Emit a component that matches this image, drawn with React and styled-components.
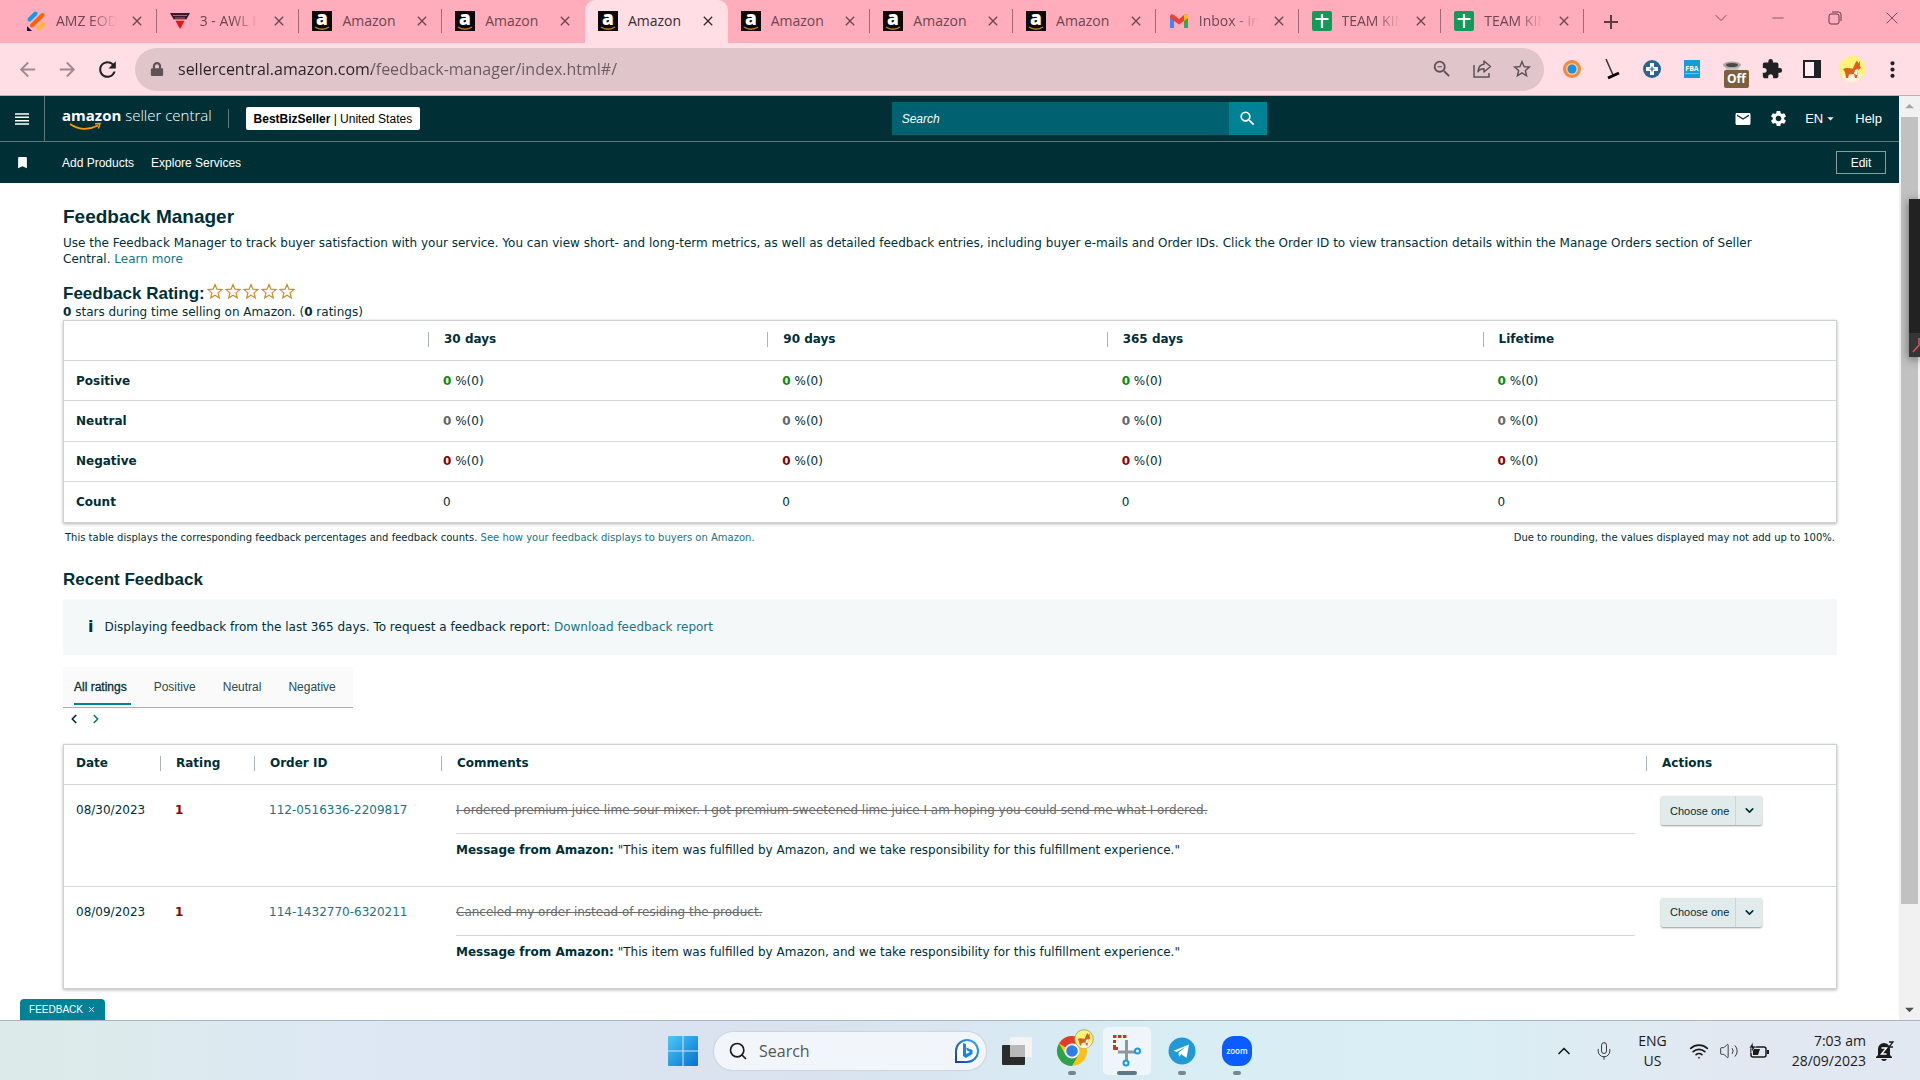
import React from 'react'
import styled, { createGlobalStyle } from 'styled-components'
import {
    MdArrowBack, MdArrowForward, MdRefresh, MdZoomOut, MdStarBorder, MdExtension,
    MdMoreVert, MdEmail, MdSettings, MdSearch, MdBookmark, MdArrowDropDown, MdArrowDropUp, MdClose, MdAdd
} from 'react-icons/md'
import { FaLock } from 'react-icons/fa'
import { ChevronDown, ChevronLeft, ChevronRight, ChevronUp, Mic, Minus, Search, Volume2, Wifi, X } from 'lucide-react'

const GlobalStyle = createGlobalStyle`
    * {
        box-sizing: border-box;
    }
    body {
        margin: 0;
        background: white;
    }
    button, input, select {
        font: inherit;
        color: inherit;
        border: none;
        background: none;
        padding: 0;
        margin: 0;
    }
    h1, h2, p {
        margin: 0;
    }
    svg {
        display: block;
        flex: none;
        overflow: visible;
    }
`
const Screen = styled.div`
    position: relative;
    display: flex;
    flex-direction: column;
    min-height: 100vh;
    overflow: hidden;
`

/* browser window */

const TabStrip = styled.div`
    display: flex;
    align-items: center;
    height: 43px;
    padding-left: 14px;
    background: #ffadbc;
    font-family: 'Open Sans', 'Noto Sans', sans-serif;
    font-size: 14px;
    color: #5d3b43;
`
const TabList = styled.div`
    flex: 0 1 1570px;
    display: grid;
    grid-template-columns: repeat(11, 1fr);
    height: 43px;
`
const BrowserTab = styled.div`
    position: relative;
    display: flex;
    align-items: center;
    min-width: 0;
    padding: 0 12px 2px 13px;
    color: ${p => p.$active ? '#3c2a2e' : '#6b4750'};
    background: ${p => p.$active ? '#ffdfe5' : 'none'};
    border-radius: 10px 10px 0 0;
    &::after {
        content: '';
        position: absolute;
        right: 0;
        top: 9px;
        width: 1px;
        height: 24px;
        background: ${p => p.$line ? '#a06a76' : 'none'};
    }
`
const TabTitle = styled.span`
    flex: 1;
    margin-left: 10px;
    margin-right: 12px;
    overflow: hidden;
    white-space: nowrap;
    mask-image: ${p => p.$fade ? 'linear-gradient(90deg, #000 55%, transparent 100%)' : 'none'};
`
const IconButton = styled.button`
    display: flex;
    align-items: center;
    justify-content: center;
    width: ${p => p.$w || 40}px;
    color: ${p => p.$color || 'inherit'};
`
const WindowControls = styled.div`
    display: flex;
    align-items: center;
    margin-left: auto;
    padding-bottom: 7px;
`
const Toolbar = styled.div`
    display: flex;
    align-items: center;
    height: 53px;
    padding: 0 8px 0 7px;
    background: #ffdfe5;
    border-bottom: 1px solid #c9aab1;
    color: #202124;
`
const Omnibox = styled.div`
    flex: 1;
    display: flex;
    align-items: center;
    height: 43px;
    margin: 0 8px;
    padding: 0 2px 0 15px;
    border-radius: 22px;
    background: #e0c5ca;
    color: #5f5257;
`
const UrlInput = styled.input`
    flex: 1;
    min-width: 0;
    height: 30px;
    margin-left: 14px;
    outline: none;
    font-family: 'Open Sans', 'Noto Sans', sans-serif;
    font-size: 16px;
    color: transparent;
    background-image: linear-gradient(90deg, #2a2226 194px, #6a595e 194px);
    background-clip: text;
`
const Extension = styled.button`
    position: relative;
    display: flex;
    justify-content: center;
    width: 40px;
`
const OffBadge = styled.span`
    position: absolute;
    left: 12px;
    top: 11px;
    padding: 0 3px;
    border-radius: 2px;
    background: #7b6040;
    color: white;
    font: bold 12px/18px 'Open Sans', sans-serif;
`

/* seller central */

const Viewport = styled.div`
    flex: 1;
    display: flex;
`
const Page = styled.div`
    flex: 1;
    min-width: 0;
    display: flex;
    flex-direction: column;
    font-family: Verdana, 'DejaVu Sans', sans-serif;
    font-size: 12px;
    line-height: 16px;
    color: #002f36;
`
const NavRow = styled.div`
    display: flex;
    align-items: center;
    height: ${p => p.$height}px;
    border-bottom: ${p => p.$line ? '1px solid #5f777b' : 'none'};
    background: #002f36;
    color: white;
    font-family: 'Liberation Sans', Arial, sans-serif;
    font-size: 12px;
`
const MenuCell = styled.button`
    display: flex;
    align-items: center;
    justify-content: center;
    width: 45px;
    height: 100%;
    border-right: ${p => p.$line ? '1px solid #5f777b' : 'none'};
`
const Brand = styled.a`
    display: flex;
    flex-direction: column;
    margin: 0 16px 0 17px;
    color: white;
    text-decoration: none;
    font-family: 'Open Sans', sans-serif;
    font-size: 15px;
    line-height: 16px;
    white-space: nowrap;
    font-weight: 300;
    b {
        font-weight: 700;
    }
`
const NavRule = styled.span`
    width: 1px;
    height: 19px;
    background: #5f777b;
`
const Account = styled.button`
    height: 23px;
    margin: 0 17px;
    padding: 0 8px;
    border-radius: 2px;
    background: white;
    color: black;
    white-space: nowrap;
`
const SearchForm = styled.form`
    display: flex;
    flex: 0 1 375px;
    height: 33px;
    margin-left: auto;
`
const SearchField = styled.input`
    flex: 1;
    min-width: 0;
    padding: 0 10px;
    background: #006170;
    &::placeholder {
        color: white;
        font-style: italic;
    }
`
const SearchButton = styled.button`
    display: flex;
    align-items: center;
    justify-content: center;
    width: 38px;
    background: #008296;
`
const NavTools = styled.div`
    display: flex;
    align-items: center;
    justify-content: flex-end;
    gap: 17px;
    width: 33.3%;
    padding-right: 17px;
    font-size: 13px;
`
const Language = styled.button`
    display: flex;
    align-items: center;
`
const NavLink = styled.a`
    margin-left: ${p => p.$gap || 0}px;
    color: white;
    text-decoration: none;
`
const EditButton = styled.button`
    width: 50px;
    height: 23px;
    margin: 0 13px 0 auto;
    border: 1px solid #8b9c9f;
`
const Content = styled.main`
    flex: 1;
    display: flex;
    flex-direction: column;
    padding: 22px 62px 0 63px;
`
const Title = styled.h1`
    font: bold 19px/24px 'Liberation Sans', Arial, sans-serif;
`
const Subtitle = styled.h2`
    display: flex;
    align-items: center;
    font: bold 17px/20px 'Liberation Sans', Arial, sans-serif;
`
const Intro = styled.p`
    margin: 6px 0 16px;
    padding-right: 40px;
`
const Link = styled.a`
    color: #1b7481;
    text-decoration: none;
`
const Stars = styled.span`
    display: flex;
    gap: 2px;
    margin-left: 2px;
    padding-bottom: 4px;
`
const DataTable = styled.table`
    width: 100%;
    height: ${p => p.$height}px;
    border: 1px solid #cfd3d4;
    border-collapse: separate;
    border-spacing: 0;
    table-layout: fixed;
    box-shadow: 0 1px 3px rgba(0, 0, 0, 0.3);
    text-align: left;
    thead {
        height: 40px;
    }
`
const HeadCell = styled.th`
    width: ${p => p.$w || 'auto'};
    height: 40px;
    padding: 0 0 2px;
    border-bottom: 1px solid #d3d7d8;
    line-height: 15px;
    span {
        display: block;
        padding-left: ${p => p.$first ? 12 : 15}px;
        border-left: ${p => p.$first ? 'none' : '1px solid #a9b4b6'};
    }
`
const Cell = styled.td`
    height: ${p => p.$top ? 101 : 40}px;
    padding: ${p => p.$top || 0}px 11px 0 15px;
    vertical-align: ${p => p.$top ? 'top' : 'middle'};
    tr:not(:last-child) > & {
        border-bottom: 1px solid #d3d7d8;
    }
    &:first-child {
        padding-left: 12px;
        padding-right: 0;
    }
`
const RowHead = styled(Cell).attrs({ as: 'th', scope: 'row' })``
const Score = styled.b`
    color: ${p => p.$color};
`
const Footnotes = styled.div`
    display: flex;
    justify-content: space-between;
    margin: 8px 2px 25px;
    font-size: 10px;
    line-height: 14px;
`
const Notice = styled.div`
    display: flex;
    align-items: center;
    gap: 11px;
    height: 56px;
    margin: 9px 0 12px;
    padding-left: 25px;
    background: #f4f8f9;
    b {
        font-size: 16px;
    }
`
const RatingTabs = styled.div`
    display: flex;
    align-self: flex-start;
    gap: 23px;
    height: 41px;
    padding: 0 13px 0 11px;
    border-bottom: 1px solid #a5b0b2;
    background: #fafafa;
    font-family: 'Liberation Sans', Arial, sans-serif;
`
const RatingTab = styled.button`
    height: 38px;
    padding-top: 3px;
    padding-right: 4px;
    border-bottom: 2px solid ${p => p.$active ? '#008296' : 'transparent'};
    color: ${p => p.$active ? '#002f36' : '#2b4a50'};
    -webkit-text-stroke: ${p => p.$active ? '0.3px' : '0'};
`
const Pager = styled.div`
    display: flex;
    height: 22px;
    margin-bottom: 14px;
`
const Comment = styled.div`
    padding-bottom: 15px;
    border-bottom: 1px solid #d3d7d8;
    color: #6b6b6b;
    text-decoration: line-through;
`
const Message = styled.div`
    padding: 8px 0 0;
`
const Picker = styled.div`
    position: relative;
    width: 101px;
    height: 29px;
    border-radius: 2px;
    background: #e2ebec;
    box-shadow: 0 1px 2px rgba(0, 0, 0, 0.4);
`
const PickerSelect = styled.select`
    width: 100%;
    height: 100%;
    padding-left: 9px;
    appearance: none;
    font-family: 'Liberation Sans', Arial, sans-serif;
    font-size: 11px;
`
const PickerArrow = styled.span`
    position: absolute;
    top: 0;
    right: 0;
    display: flex;
    align-items: center;
    justify-content: center;
    width: 27px;
    height: 100%;
    border-left: 1px solid #cbd6d8;
    pointer-events: none;
`
const FeedbackTab = styled.button`
    display: flex;
    align-items: center;
    justify-content: center;
    gap: 4px;
    width: 85px;
    height: 21px;
    margin-left: 20px;
    border-radius: 4px 4px 0 0;
    background: #008296;
    color: white;
    font: 10px 'Liberation Sans', Arial, sans-serif;
`
const Scrollbar = styled.div`
    display: flex;
    flex-direction: column;
    align-items: center;
    width: 21px;
    background: #f1f1f1;
`
const Thumb = styled.div`
    flex: 1;
    width: 17px;
    margin-bottom: 95px;
    background: #c1c1c1;
`
const CallPanel = styled.div`
    position: absolute;
    right: 0;
    top: 199px;
    width: 11px;
    height: 158px;
    background: linear-gradient(#222 134px, #353535 134px);
    box-shadow: 0 2px 10px rgba(0, 0, 0, 0.5);
    svg {
        position: absolute;
        left: 3px;
        bottom: 3px;
    }
`

/* taskbar */

const Taskbar = styled.div`
    display: grid;
    grid-template-columns: 1fr auto 1fr;
    align-items: center;
    height: 60px;
    border-top: 1px solid #a9b4bc;
    background: linear-gradient(90deg, #dcebe8, #dde8f4 18%, #d9e2ee 42%, #d8ecf4 58%, #d9eff5 75%, #e2e8f1 90%);
    font-family: 'Open Sans', 'Noto Sans', sans-serif;
    color: #1b1b1b;
`
const Apps = styled.div`
    grid-column: 2;
    display: flex;
    align-items: center;
    gap: 7px;
`
const AppButton = styled.button`
    position: relative;
    display: flex;
    align-items: center;
    justify-content: center;
    width: 48px;
    height: 48px;
    border-radius: 5px;
    background: ${p => p.$active ? '#eff6fa' : 'none'};
    &::after {
        content: '';
        position: absolute;
        bottom: 0;
        width: ${p => p.$mark || 0}px;
        height: 4px;
        border-radius: 2px;
        background: ${p => p.$active ? '#5c7886' : '#78868d'};
    }
`
const TaskSearch = styled.label`
    display: flex;
    align-items: center;
    width: 272px;
    height: 38px;
    padding: 0 6px 0 14px;
    border-radius: 19px;
    background: #f2f6fa;
    box-shadow: 0 0 1px 1px #cbd5de;
    input {
        flex: 1;
        min-width: 0;
        margin-left: 11px;
        font-size: 16px;
    }
    input::placeholder {
        color: #555;
    }
`
const Tray = styled.div`
    display: flex;
    align-items: center;
    justify-content: flex-end;
    gap: 10px;
    padding-right: 26px;
    font-size: 14px;
    line-height: 20px;
`
const Stack = styled.div`
    display: flex;
    flex-direction: column;
    align-items: ${p => p.$end ? 'flex-end' : 'center'};
    margin: 0 ${p => p.$right || 0}px 0 ${p => p.$left || 0}px;
`

const AmazonFavicon = () => (
    <svg width="20" height="20" viewBox="0 0 20 20">
        <rect width="20" height="20" fill="#0b0706" />
        <text x="10" y="14" textAnchor="middle" fontFamily="Open Sans, sans-serif" fontSize="19" fontWeight="800" fill="#fff">a</text>
        <path d="M3 16C7 19 13 19 17 16" fill="none" stroke="#c07a18" strokeWidth="1.500" />
    </svg>
)
const SlashFavicon = () => (
    <svg width="19" height="20" viewBox="0 0 19 20">
        <path d="M2.500 8.500L8.500 2.500" stroke="#0d99ff" strokeWidth="4" strokeLinecap="round" />
        <path d="M5 14.500L15.500 4" stroke="#ff6100" strokeWidth="4" strokeLinecap="round" />
        <path d="M11.500 17.500L16 13" stroke="#ffb629" strokeWidth="4" strokeLinecap="round" />
        <path d="M0 15v5h5z" fill="#0a1551" />
    </svg>
)
const ShieldFavicon = () => (
    <svg width="20" height="20" viewBox="0 0 20 20">
        <path d="M0 2h20l-4 7H4z" fill="#3a1630" />
        <path d="M3 4.500h14M5 7h10" stroke="#b56a3a" strokeWidth="1" />
        <path d="M5 9h10l-5 9z" fill="#f01018" />
        <path d="M4 9h12" stroke="#fff" strokeWidth="1" />
    </svg>
)
const GmailFavicon = () => (
    <svg width="20" height="20" viewBox="0 0 20 20">
        <path d="M1 6v11h4V9z" fill="#4285f4" />
        <path d="M19 6v11h-4V9z" fill="#34a853" />
        <path d="M1 5q1-3 4-1l5 4 5-4q3-2 4 1v2l-9 6.500L1 7z" fill="#ea4335" />
        <path d="M15 4q3-2 4 1v2l-4 3z" fill="#fbbc04" />
    </svg>
)
const SheetFavicon = () => (
    <svg width="20" height="20" viewBox="0 0 20 20">
        <rect width="20" height="20" rx="2" fill="#149a58" />
        <path d="M10 3v14M3.500 8h13" stroke="#fff" strokeWidth="2.200" />
    </svg>
)
const ShareIcon = () => (
    <svg width="20" height="20" viewBox="0 0 20 20" fill="none" stroke="currentColor" strokeWidth="1.500">
        <path d="M2 6v12h15v-4" />
        <path d="M12 2l6.500 5.500L12 13v-3.200c-3 0-4.800.8-6 3 .2-4 2.400-7.300 6-7.600z" strokeLinejoin="round" />
    </svg>
)
const RestoreIcon = () => (
    <svg width="14" height="14" viewBox="0 0 14 14" fill="none" stroke="currentColor">
        <rect x="1" y="3" width="10" height="10" rx="2" />
        <path d="M4 1h6.500Q13 1 13 3.500V10" />
    </svg>
)
const RingIcon = () => (
    <svg width="20" height="20" viewBox="0 0 20 20">
        <circle cx="10" cy="10" r="9" fill="#f08a3c" />
        <circle cx="10" cy="10" r="6" fill="#f9c79a" />
        <circle cx="10" cy="10" r="4.500" fill="#1993dd" />
    </svg>
)
const BroomIcon = () => (
    <svg width="20" height="22" viewBox="0 0 20 22">
        <path d="M4 1l7 16" stroke="#333" strokeWidth="1.500" />
        <path d="M6 20l11-5" stroke="#000" strokeWidth="3" />
    </svg>
)
const PlusBadgeIcon = () => (
    <svg width="20" height="20" viewBox="0 0 20 20">
        <circle cx="10" cy="10" r="9" fill="#2a6494" />
        <path d="M8 4h4v4h4v4h-4v4H8v-4H4V8h4z" fill="#fff" />
        <path d="M10 7.500v5M7.500 10h5" stroke="#2a6494" strokeWidth="1.200" />
    </svg>
)
const FbaIcon = () => (
    <svg width="16" height="18" viewBox="0 0 16 18">
        <rect width="16" height="18" fill="#129ed9" />
        <text x="8" y="11" textAnchor="middle" fontFamily="Open Sans, sans-serif" fontSize="7" fontWeight="700" fill="#fff">FBA</text>
        <path d="M1 13.500h14" stroke="#6cc6ec" />
    </svg>
)
const HatIcon = () => (
    <svg width="20" height="20" viewBox="0 0 20 20">
        <path d="M3 6h14l-2 11H5z" fill="#c9c4c6" />
        <ellipse cx="10" cy="6" rx="9" ry="3.500" fill="#aaa5a7" />
        <ellipse cx="10" cy="6" rx="6" ry="2" fill="#4b4648" />
    </svg>
)
const PanelIcon = () => (
    <svg width="18" height="18" viewBox="0 0 18 18">
        <rect x="1" y="1" width="16" height="16" fill="#ffeef1" stroke="#202124" strokeWidth="2" />
        <path d="M11 1h6v16h-6z" fill="#202124" />
    </svg>
)
const CorgiIcon = ({ size, ring }) => (
    <svg width={size} height={size} viewBox="0 0 28 28">
        <circle cx="14" cy="14" r="13" fill="#fdf27a" stroke={ring || 'none'} />
        <path d="M4 20q10-3 20 0-3 7-10 7T4 20z" fill="#fff3e2" />
        <path d="M5 14l3-1 7 .500 2-5 2-3 1.500 3L22 6v5l1 2-3 2-1 8h-2l-1-4-5 .500-1 3.500H8l-1-6z" fill="#d9601f" />
        <path d="M17 15l3-1-1 6-3-1z" fill="#fff" />
    </svg>
)
const SmileIcon = () => (
    <svg width="60" height="8" viewBox="0 0 60 8">
        <path d="M8 1q13 9 28 1.500" fill="none" stroke="#ff9900" strokeWidth="1.800" />
        <path d="M33 .800l5-.300-1.500 5" fill="none" stroke="#ff9900" strokeWidth="1.400" />
    </svg>
)
const MenuIcon = () => (
    <svg width="14" height="12" viewBox="0 0 14 12" stroke="white" strokeWidth="1.500">
        <path d="M0 1h14M0 4.300h14M0 7.700h14M0 11h14" />
    </svg>
)
const Star = () => (
    <svg width="16" height="17" viewBox="0 0 16 17">
        <path d="M8 1.500l1.900 4.700 5 .4-3.800 3.300 1.200 5L8 12.200l-4.300 2.700 1.200-5L1.100 6.600l5-.4z" fill="#fffdf5" stroke="#c78f2b" strokeWidth="1.200" />
    </svg>
)
const WindowsIcon = () => (
    <svg width="30" height="30" viewBox="0 0 30 30">
        <defs>
            <linearGradient id="win" x1="0" y1="0" x2="1" y2="1">
                <stop offset="0" stopColor="#4cc8f7" />
                <stop offset="1" stopColor="#0571cf" />
            </linearGradient>
        </defs>
        <path d="M0 1q0-1 1-1h13.500v14.500H0zM15.500 0H29q1 0 1 1v13.500H15.500zM0 15.500h14.500V30H1q-1 0-1-1zM15.500 15.500H30V29q0 1-1 1H15.500z" fill="url(#win)" />
    </svg>
)
const BingIcon = () => (
    <svg width="26" height="26" viewBox="0 0 26 26">
        <defs>
            <linearGradient id="bing" x1="0" y1="1" x2="1" y2="0">
                <stop offset="0" stopColor="#1b3fae" />
                <stop offset="1" stopColor="#2bb0ee" />
            </linearGradient>
        </defs>
        <path d="M2 24V13A11 11 0 1 1 13 24z" fill="#fff" stroke="url(#bing)" strokeWidth="2" />
        <path d="M9 5l3 1v10l4-2-3-1.500-1-3 6.500 2.500v4L12 20l-3-2z" fill="#1a86e0" />
    </svg>
)
const TaskViewIcon = () => (
    <svg width="30" height="28" viewBox="0 0 30 28">
        <rect x="0" y="8" width="23" height="20" rx="1" fill="#2b2b2b" />
        <rect x="8" y="0" width="22" height="20" rx="1" fill="#f3f3f3" />
        <path d="M8 8h15v12H8z" fill="#b9b9b9" />
    </svg>
)
const ChromeIcon = () => (
    <svg width="30" height="30" viewBox="0 0 30 30">
        <circle cx="15" cy="15" r="15" fill="#fbc116" />
        <path d="M15 15L2 7.500A15 15 0 0 1 28 7.500H15z" fill="#e33b2e" />
        <path d="M15 15L8.500 18.800 2 7.500A15 15 0 0 0 15 30l6.500-11.200z" fill="#2ba24c" />
        <circle cx="15" cy="15" r="7.500" fill="#fff" />
        <circle cx="15" cy="15" r="5.800" fill="#2f7de9" />
    </svg>
)
const ProfileBadge = styled.span`
    position: absolute;
    right: 2px;
    top: 2px;
`
const SnipIcon = () => (
    <svg width="28" height="32" viewBox="0 0 28 32">
        <path d="M0 1.500h3.500M5 1.500h3.500M10 1.500h3.500M1.500 5v3M1.500 10v4.500M0 13.500h5" stroke="#c4391d" strokeWidth="3" />
        <path d="M13.500 5v20M5 17h17" stroke="#8e979c" strokeWidth="3" fill="none" />
        <circle cx="13" cy="28" r="2.500" fill="none" stroke="#1c9be0" strokeWidth="2" />
        <circle cx="24.500" cy="16" r="2.500" fill="none" stroke="#1c9be0" strokeWidth="2" />
    </svg>
)
const TelegramIcon = () => (
    <svg width="28" height="28" viewBox="0 0 28 28">
        <circle cx="14" cy="14" r="13.500" fill="#2199d6" />
        <path d="M5.500 13.800L21 7.500 18.500 21l-5-3.800-2.500 2.500-.5-4.200L18 9.800l-9.300 5.300z" fill="#fff" />
    </svg>
)
const ZoomIcon = () => (
    <svg width="30" height="30" viewBox="0 0 30 30">
        <rect width="30" height="30" rx="12" fill="#0b5cff" />
        <text x="15" y="18" textAnchor="middle" fontFamily="Open Sans, sans-serif" fontSize="8" fontWeight="600" fill="#fff">zoom</text>
    </svg>
)
const BatteryIcon = () => (
    <svg width="21" height="18" viewBox="0 0 21 18" fill="none">
        <rect x="2" y="5" width="15" height="10" rx="2" stroke="#1b1b1b" strokeWidth="1.500" />
        <path d="M4 7h7l-2 6H4zM18 8h2v4h-2z" fill="#1b1b1b" />
        <path d="M4 0L0 6h3l-1 5 5-7H4z" fill="#1b1b1b" stroke="#e2e8f1" strokeWidth=".600" />
    </svg>
)
const BellIcon = () => (
    <svg width="18" height="20" viewBox="0 0 18 20">
        <path d="M2 14V8a6 6 0 0 1 12 0v6l2 2v1H0v-1zM5 18h6q-1 2-3 2t-3-2z" fill="#1b1b1b" />
        <path d="M5.500 7h5l-5 6h5" fill="none" stroke="#fff" strokeWidth="1.400" />
        <path d="M13 1h4l-4 5h4" fill="none" stroke="#1b1b1b" strokeWidth="1.300" />
    </svg>
)

const tabs = [
    { title: 'AMZ EOD', Icon: SlashFavicon, fade: true, line: true },
    { title: '3 - AWL I', Icon: ShieldFavicon, fade: true, line: true },
    { title: 'Amazon', Icon: AmazonFavicon, line: true },
    { title: 'Amazon', Icon: AmazonFavicon },
    { title: 'Amazon', Icon: AmazonFavicon, active: true },
    { title: 'Amazon', Icon: AmazonFavicon, line: true },
    { title: 'Amazon', Icon: AmazonFavicon, line: true },
    { title: 'Amazon', Icon: AmazonFavicon, line: true },
    { title: 'Inbox - in', Icon: GmailFavicon, fade: true, line: true },
    { title: 'TEAM KIN', Icon: SheetFavicon, fade: true, line: true },
    { title: 'TEAM KIN', Icon: SheetFavicon, fade: true, line: true }
]
const periods = ['30 days', '90 days', '365 days', 'Lifetime']
const ratings = [
    { name: 'Positive', color: '#0a8a0a' },
    { name: 'Neutral', color: '#666666' },
    { name: 'Negative', color: '#8b0000' }
]
const feedback = [
    {
        date: '08/30/2023',
        order: '112-0516336-2209817',
        comment: 'I ordered premium juice lime sour mixer. I got premium sweetened lime juice I am hoping you could send me what I ordered.'
    },
    {
        date: '08/09/2023',
        order: '114-1432770-6320211',
        comment: 'Canceled my order instead of residing the product.'
    }
]

const Browser = () => (
    <>
        <TabStrip>
            <TabList>
                {tabs.map(({ title, Icon, active, fade, line }, i) => (
                    <BrowserTab key={i} $active={active} $line={line}>
                        <Icon />
                        <TabTitle $fade={fade}>{title}</TabTitle>
                        <IconButton $w={16} aria-label="Close tab"><MdClose size={16} /></IconButton>
                    </BrowserTab>
                ))}
            </TabList>
            <IconButton $w={54} aria-label="New tab"><MdAdd size={24} /></IconButton>
            <WindowControls>
                <IconButton $w={57} aria-label="Search tabs"><ChevronDown size={20} strokeWidth={1} /></IconButton>
                <IconButton $w={57} aria-label="Minimize"><Minus size={18} strokeWidth={1} /></IconButton>
                <IconButton $w={57} aria-label="Restore"><RestoreIcon /></IconButton>
                <IconButton $w={57} aria-label="Close"><X size={20} strokeWidth={1} /></IconButton>
            </WindowControls>
        </TabStrip>
        <Toolbar>
            <IconButton $color="#a08a90" aria-label="Back"><MdArrowBack size={23} /></IconButton>
            <IconButton $color="#a08a90" aria-label="Forward"><MdArrowForward size={23} /></IconButton>
            <IconButton aria-label="Reload"><MdRefresh size={25} /></IconButton>
            <Omnibox>
                <FaLock size={14} />
                <UrlInput aria-label="Address" defaultValue="sellercentral.amazon.com/feedback-manager/index.html#/" />
                <IconButton aria-label="Zoom"><MdZoomOut size={22} /></IconButton>
                <IconButton aria-label="Share"><ShareIcon /></IconButton>
                <IconButton aria-label="Bookmark"><MdStarBorder size={22} /></IconButton>
            </Omnibox>
            <Extension aria-label="Ring"><RingIcon /></Extension>
            <Extension aria-label="Broom"><BroomIcon /></Extension>
            <Extension aria-label="Plus"><PlusBadgeIcon /></Extension>
            <Extension aria-label="FBA"><FbaIcon /></Extension>
            <Extension><HatIcon /><OffBadge>Off</OffBadge></Extension>
            <Extension aria-label="Extensions"><MdExtension size={22} /></Extension>
            <Extension aria-label="Side panel"><PanelIcon /></Extension>
            <Extension aria-label="Profile"><CorgiIcon size={28} /></Extension>
            <Extension aria-label="Menu"><MdMoreVert size={25} /></Extension>
        </Toolbar>
    </>
)

const Navigation = () => (
    <header>
        <NavRow $height={46} $line>
            <MenuCell $line aria-label="Menu"><MenuIcon /></MenuCell>
            <Brand href="#">
                <span><b>amazon</b> seller central</span>
                <SmileIcon />
            </Brand>
            <NavRule />
            <Account><b>BestBizSeller</b> | United States</Account>
            <SearchForm>
                <SearchField placeholder="Search" aria-label="Search" />
                <SearchButton type="button" aria-label="Go"><MdSearch size={19} /></SearchButton>
            </SearchForm>
            <NavTools>
                <MdEmail size={18} />
                <MdSettings size={19} />
                <Language>EN<MdArrowDropDown size={15} /></Language>
                <NavLink href="#">Help</NavLink>
            </NavTools>
        </NavRow>
        <NavRow $height={41}>
            <MenuCell aria-label="Bookmarks"><MdBookmark size={15} /></MenuCell>
            <NavLink href="#" $gap={17}>Add Products</NavLink>
            <NavLink href="#" $gap={17}>Explore Services</NavLink>
            <EditButton>Edit</EditButton>
        </NavRow>
    </header>
)

const SummaryTable = () => (
    <DataTable $height={203}>
        <thead>
            <tr>
                <HeadCell $first $w="364px" aria-label="Rating" />
                <HeadCell $w="24.1%"><span>{periods[0]}</span></HeadCell>
                <HeadCell $w="24.1%"><span>{periods[1]}</span></HeadCell>
                <HeadCell $w="26.7%"><span>{periods[2]}</span></HeadCell>
                <HeadCell $w="25.1%"><span>{periods[3]}</span></HeadCell>
            </tr>
        </thead>
        <tbody>
            {ratings.map(({ name, color }) => (
                <tr key={name}>
                    <RowHead>{name}</RowHead>
                    {periods.map(period => (
                        <Cell key={period}><Score $color={color}>0</Score> %(0)</Cell>
                    ))}
                </tr>
            ))}
            <tr>
                <RowHead>Count</RowHead>
                {periods.map(period => <Cell key={period}>0</Cell>)}
            </tr>
        </tbody>
    </DataTable>
)

const FeedbackTable = () => (
    <DataTable $height={245}>
        <thead>
            <tr>
                <HeadCell $first $w="96px"><span>Date</span></HeadCell>
                <HeadCell $w="94px"><span>Rating</span></HeadCell>
                <HeadCell $w="187px"><span>Order ID</span></HeadCell>
                <HeadCell><span>Comments</span></HeadCell>
                <HeadCell $w="190px"><span>Actions</span></HeadCell>
            </tr>
        </thead>
        <tbody>
            {feedback.map(({ date, order, comment }) => (
                <tr key={order}>
                    <Cell $top={17}>{date}</Cell>
                    <Cell $top={17}><Score $color="#8b0000">1</Score></Cell>
                    <Cell $top={17}><Link href="#">{order}</Link></Cell>
                    <Cell $top={17}>
                        <Comment>{comment}</Comment>
                        <Message>
                            <b>Message from Amazon:</b>
                            {' '}
                            "This item was fulfilled by Amazon, and we take responsibility for this fulfillment experience."
                        </Message>
                    </Cell>
                    <Cell $top={11}>
                        <Picker>
                            <PickerSelect aria-label={`Action for ${order}`}>
                                <option>Choose one</option>
                            </PickerSelect>
                            <PickerArrow><ChevronDown size={13} strokeWidth={3} /></PickerArrow>
                        </Picker>
                    </Cell>
                </tr>
            ))}
        </tbody>
    </DataTable>
)

const App = () => {
    return (
        <Screen>
            <GlobalStyle />
            <Browser />
            <Viewport>
                <Page>
                    <Navigation />
                    <Content>
                        <Title>Feedback Manager</Title>
                        <Intro>
                            Use the Feedback Manager to track buyer satisfaction with your service. You can view short- and long-term metrics, as well as detailed feedback entries, including buyer e-mails and Order IDs. Click the Order ID to view transaction details within the Manage Orders section of Seller Central.
                            {' '}
                            <Link href="#">Learn more</Link>
                        </Intro>
                        <Subtitle>
                            Feedback Rating:
                            <Stars>
                                {[1, 2, 3, 4, 5].map(n => <Star key={n} />)}
                            </Stars>
                        </Subtitle>
                        <p><b>0</b> stars during time selling on Amazon. (<b>0</b> ratings)</p>
                        <SummaryTable />
                        <Footnotes>
                            <span>
                                This table displays the corresponding feedback percentages and feedback counts.
                                {' '}
                                <Link href="#">See how your feedback displays to buyers on Amazon.</Link>
                            </span>
                            <span>Due to rounding, the values displayed may not add up to 100%.</span>
                        </Footnotes>
                        <Subtitle>Recent Feedback</Subtitle>
                        <Notice>
                            <b>i</b>
                            <span>
                                Displaying feedback from the last 365 days. To request a feedback report:
                                {' '}
                                <Link href="#">Download feedback report</Link>
                            </span>
                        </Notice>
                        <RatingTabs>
                            <RatingTab $active>All ratings</RatingTab>
                            <RatingTab>Positive</RatingTab>
                            <RatingTab>Neutral</RatingTab>
                            <RatingTab>Negative</RatingTab>
                        </RatingTabs>
                        <Pager>
                            <IconButton $w={22} aria-label="Previous"><ChevronLeft size={14} strokeWidth={3} /></IconButton>
                            <IconButton $w={22} $color="#1b7481" aria-label="Next"><ChevronRight size={14} strokeWidth={3} /></IconButton>
                        </Pager>
                        <FeedbackTable />
                    </Content>
                    <FeedbackTab>FEEDBACK <X size={9} /></FeedbackTab>
                </Page>
                <Scrollbar>
                    <MdArrowDropUp size={21} color="#a3a3a3" />
                    <Thumb />
                    <MdArrowDropDown size={21} color="#505050" />
                </Scrollbar>
            </Viewport>
            <CallPanel>
                <svg width="8" height="20" viewBox="0 0 8 20" fill="none" stroke="#e0505f" strokeWidth="1.500">
                    <path d="M1 18L8 10M7 4v6" />
                </svg>
            </CallPanel>
            <Taskbar>
                <Apps>
                    <AppButton aria-label="Start"><WindowsIcon /></AppButton>
                    <TaskSearch>
                        <Search size={20} strokeWidth={2} />
                        <input placeholder="Search" aria-label="Search" />
                        <BingIcon />
                    </TaskSearch>
                    <AppButton aria-label="Task view"><TaskViewIcon /></AppButton>
                    <AppButton $mark={8} aria-label="Chrome">
                        <ChromeIcon />
                        <ProfileBadge><CorgiIcon size={20} ring="#9a8a4a" /></ProfileBadge>
                    </AppButton>
                    <AppButton $mark={20} $active aria-label="Snipping Tool"><SnipIcon /></AppButton>
                    <AppButton $mark={8} aria-label="Telegram"><TelegramIcon /></AppButton>
                    <AppButton $mark={8} aria-label="Zoom"><ZoomIcon /></AppButton>
                </Apps>
                <Tray>
                    <ChevronUp size={20} />
                    <Stack $left={10} $right={10}><Mic size={20} strokeWidth={1} /></Stack>
                    <Stack $left={4} $right={12}><span>ENG</span><span>US</span></Stack>
                    <Wifi size={20} />
                    <Volume2 size={20} strokeWidth={1} />
                    <BatteryIcon />
                    <Stack $end $left={12}><span>7:03 am</span><span>28/09/2023</span></Stack>
                    <BellIcon />
                </Tray>
            </Taskbar>
        </Screen>
    )
}

export default App
